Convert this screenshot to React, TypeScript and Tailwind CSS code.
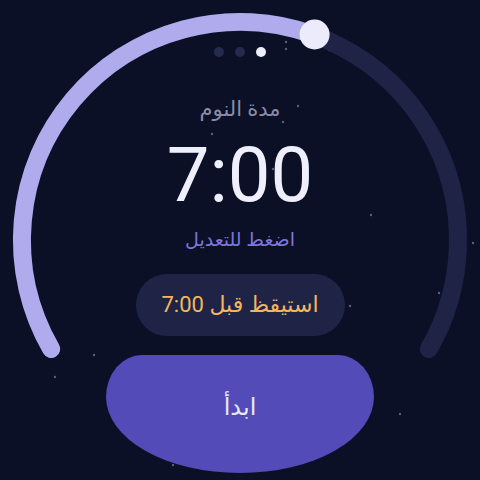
const stars: [number, number][] = [
  [286, 42], [286, 49], [329, 50], [298, 106], [283, 122], [212, 134],
  [273, 169], [371, 215], [473, 243], [439, 293], [350, 306], [94, 355],
  [55, 377], [400, 414], [173, 465],
]

function Ring() {
  return (
    <svg className="absolute inset-0" width="480" height="480" viewBox="0 0 480 480" aria-hidden="true">
      {stars.map(([x, y], i) => (
        <circle key={i} cx={x} cy={y} r="1.2" fill="#5b5e7a" />
      ))}
      <path
        d="M 51.2 349 A 218 218 0 1 1 428.8 349"
        fill="none"
        stroke="#1f2447"
        strokeWidth="18"
        strokeLinecap="round"
      />
      <path
        d="M 51.2 349 A 218 218 0 0 1 314.6 35.1"
        fill="none"
        stroke="#b0abec"
        strokeWidth="18"
        strokeLinecap="round"
      />
      <circle cx="314.6" cy="34.5" r="15" fill="#ecebfc" />
    </svg>
  )
}

export default function App() {
  return (
    <div
      dir="rtl"
      className="relative w-[480px] h-[480px] overflow-hidden bg-[#0b1026] font-['Roboto','DejaVu_Sans',sans-serif]"
    >
      <Ring />
      <div className="relative flex flex-col items-center pt-[47px]">
        <div dir="ltr" className="flex gap-[11px]">
          <span className="w-[10px] h-[10px] rounded-full bg-[#252a4f]" />
          <span className="w-[10px] h-[10px] rounded-full bg-[#252a4f]" />
          <span className="w-[10px] h-[10px] rounded-full bg-[#eeedfc]" />
        </div>
        <p className="mt-[40px] text-[21px] leading-[24px] text-[#8a8ca6]">مدة النوم</p>
        <p dir="ltr" className="mt-[16px] text-[76px] leading-[76px] text-[#eeeefc]">7:00</p>
        <p className="mt-[16px] text-[19px] leading-[22px] text-[#7d76dc]">اضغط للتعديل</p>
        <div className="mt-[23px] w-[209px] h-[62px] rounded-full bg-[#1f2447] flex items-center justify-center">
          <span className="text-[22px] leading-[28px] text-[#f2b75e]">استيقظ قبل 7:00</span>
        </div>
        <button className="mt-[19px] w-[268px] h-[118px] bg-[#534bb8] flex justify-center pt-[37px] rounded-tl-[36px_42px] rounded-tr-[36px_42px] rounded-bl-[134px_76px] rounded-br-[134px_76px]">
          <span className="text-[24px] leading-[30px] text-[#e9e7fb]">ابدأ</span>
        </button>
      </div>
    </div>
  )
}
